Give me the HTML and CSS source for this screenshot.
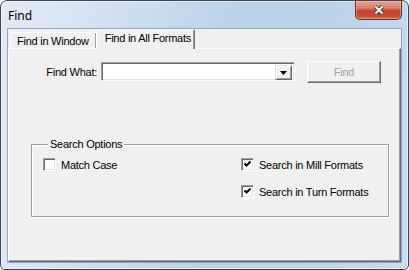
FILE: index.html
```html
<!DOCTYPE html>
<html>

<head>
    <title>Find</title>
    <link rel="stylesheet" href="styles.css">
</head>

<body>
    <div class="window">
        <div class="titlebar">
            <span class="title">Find</span>
            <button type="button" class="close-btn">
                <svg width="12" height="10" viewBox="0 0 12 10">
                    <path d="M2.5 1.5 L9.5 8.5 M9.5 1.5 L2.5 8.5" stroke="#4a3a36" stroke-width="4" fill="none" />
                    <path d="M2.5 1.5 L9.5 8.5 M9.5 1.5 L2.5 8.5" stroke="#ffffff" stroke-width="2" fill="none" />
                </svg>
            </button>
        </div>

        <div class="client">
            <div class="tabs">
                <div class="tab">Find in Window</div>
                <div class="tab active">Find in All Formats</div>
            </div>

            <div class="panel">
                <div class="find-row">
                    <label for="find_what" class="find-label">Find What:</label>
                    <div class="combo" id="find_what">
                        <span class="combo-btn">
                            <svg width="7" height="4" viewBox="0 0 7 4">
                                <path d="M0 0 H7 L3.5 4 Z" fill="#000" />
                            </svg>
                        </span>
                    </div>
                    <button type="button" class="find-btn" disabled>Find</button>
                </div>

                <fieldset class="options">
                    <legend>Search Options</legend>
                    <div class="option-grid">
                        <label class="check">
                            <span class="box"></span>
                            <span>Match Case</span>
                        </label>
                        <label class="check">
                            <span class="box">
                                <svg width="9" height="9" viewBox="0 0 9 9">
                                    <path d="M1.5 3.5 L3.5 5.5 L7.5 1.5" stroke="#000" stroke-width="2" fill="none" />
                                </svg>
                            </span>
                            <span>Search in Mill Formats</span>
                        </label>
                        <span></span>
                        <label class="check">
                            <span class="box">
                                <svg width="9" height="9" viewBox="0 0 9 9">
                                    <path d="M1.5 3.5 L3.5 5.5 L7.5 1.5" stroke="#000" stroke-width="2" fill="none" />
                                </svg>
                            </span>
                            <span>Search in Turn Formats</span>
                        </label>
                    </div>
                </fieldset>
            </div>
        </div>
    </div>
</body>

</html>
```

FILE: styles.css
```css
body {
    margin: 0;
    font-family: "Liberation Sans", Arial, sans-serif;
    font-size: 11px;
    letter-spacing: -0.25px;
    color: #000;
    background-color: #fff;
}

.window {
    width: 409px;
    height: 270px;
    box-sizing: border-box;
    border: 1px solid #3d4650;
    border-radius: 7px 7px 5px 5px;
    padding: 0 6px 6px 6px;
    display: flex;
    flex-direction: column;
    background: linear-gradient(100deg, #e2ebf6 0%, #d3e2f2 22%, #b9d1ea 55%, #bdd4ec 80%, #c9dcf0 100%);
    box-shadow: inset 0 0 0 1px rgba(255, 255, 255, 0.55);
}

.titlebar {
    height: 27px;
    display: flex;
    justify-content: space-between;
    align-items: flex-start;
}

.title {
    font-family: "Noto Sans", sans-serif;
    font-size: 12px;
    letter-spacing: 0;
    padding: 6px 0 0 1px;
}

.close-btn {
    width: 47px;
    height: 19px;
    padding: 0;
    border: 1px solid #6b2e25;
    border-top: none;
    border-radius: 0 0 5px 5px;
    background: linear-gradient(#e3a090 0%, #d7806b 40%, #c4432a 55%, #c64f36 85%, #d77659 100%);
    box-shadow: inset 0 0 0 1px rgba(255, 220, 200, 0.35);
    display: flex;
    align-items: center;
    justify-content: center;
}

.client {
    flex: 1;
    display: flex;
    flex-direction: column;
    background-color: #f0f0f0;
    border: 1px solid #8fa6c1;
}

.tabs {
    height: 19px;
    display: flex;
    align-items: flex-end;
    padding-left: 2px;
}

.tab {
    position: relative;
    height: 16px;
    box-sizing: border-box;
    padding: 2px 7px 0 6px;
    background-color: #f0f0f0;
    border-top: 1px solid #fff;
    border-left: 1px solid #fff;
    border-right: 1px solid #696969;
    box-shadow: inset -1px 0 0 #a0a0a0;
    border-radius: 2px 2px 0 0;
}

.tab.active {
    height: 20px;
    margin-bottom: -1px;
    margin-left: -1px;
    padding: 2px 3px 0 8px;
    z-index: 1;
}

.panel {
    flex: 1;
    border-top: 1px solid #fff;
    border-left: 1px solid #fff;
    border-right: 1px solid #696969;
    border-bottom: 1px solid #696969;
    box-shadow: inset -1px -1px 0 #a0a0a0;
}

.find-row {
    display: flex;
    align-items: flex-start;
    margin-top: 12px;
    height: 22px;
}

.find-label {
    width: 88px;
    text-align: right;
    margin-top: 5px;
}

.combo {
    margin: 1px 0 0 4px;
    width: 194px;
    height: 19px;
    box-sizing: border-box;
    display: flex;
    justify-content: flex-end;
    padding: 2px;
    background-color: #fff;
    border-top: 1px solid #a0a0a0;
    border-left: 1px solid #a0a0a0;
    border-right: 1px solid #fff;
    border-bottom: 1px solid #fff;
    box-shadow: inset 1px 1px 0 #696969, inset -1px -1px 0 #e3e3e3;
}

.combo-btn {
    width: 17px;
    height: 15px;
    box-sizing: border-box;
    display: flex;
    align-items: center;
    justify-content: center;
    background-color: #f0f0f0;
    border-top: 1px solid #e3e3e3;
    border-left: 1px solid #e3e3e3;
    border-right: 1px solid #696969;
    border-bottom: 1px solid #696969;
    box-shadow: inset 1px 1px 0 #fff, inset -1px -1px 0 #a0a0a0;
}

.find-btn {
    margin-left: 12px;
    width: 74px;
    height: 22px;
    padding: 0;
    font-family: inherit;
    font-size: 11px;
    letter-spacing: inherit;
    color: #a0a0a0;
    background-color: #f0f0f0;
    border-top: 1px solid #fff;
    border-left: 1px solid #fff;
    border-right: 1px solid #696969;
    border-bottom: 1px solid #696969;
    box-shadow: inset -1px -1px 0 #a0a0a0;
}

.options {
    margin: 55px 0 0 22px;
    width: 358px;
    height: 79px;
    box-sizing: border-box;
    padding: 8px 0 0 11px;
    border: 1px solid #a0a0a0;
    box-shadow: inset 1px 1px 0 #fff, 1px 1px 0 #fff;
}

.options legend {
    padding: 0 2px;
    margin-left: 5px;
    background-color: #f0f0f0;
}

.option-grid {
    display: grid;
    grid-template-columns: 198px auto;
    row-gap: 14px;
}

.check {
    display: flex;
    align-items: center;
    gap: 5px;
    height: 13px;
}

.box {
    width: 13px;
    height: 13px;
    box-sizing: border-box;
    display: flex;
    align-items: center;
    justify-content: center;
    background-color: #fff;
    border-top: 1px solid #a0a0a0;
    border-left: 1px solid #a0a0a0;
    border-right: 1px solid #fff;
    border-bottom: 1px solid #fff;
    box-shadow: inset 1px 1px 0 #696969, inset -1px -1px 0 #e3e3e3;
}
```
